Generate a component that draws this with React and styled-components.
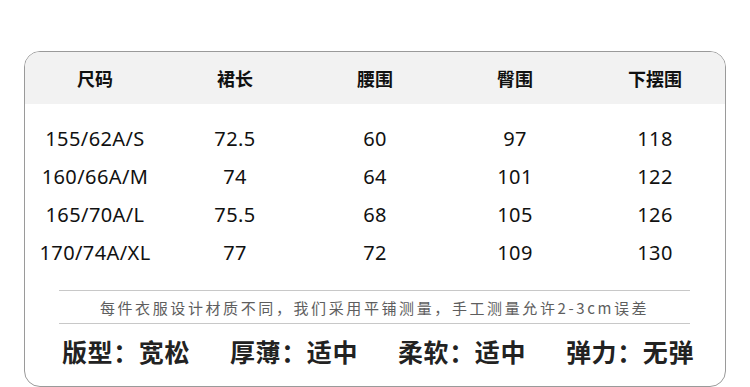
import React from "react"
import styled, { createGlobalStyle } from "styled-components"

const GlobalStyle = createGlobalStyle`
  html, body {
    margin: 0;
    padding: 0;
    background: #fff;
  }
  body {
    font-family: "Noto Sans", "Noto Sans CJK SC", sans-serif;
  }
`

const headers = ["尺码", "裙长", "腰围", "臀围", "下摆围"]

const rows = [
  ["155/62A/S", "72.5", "60", "97", "118"],
  ["160/66A/M", "74", "64", "101", "122"],
  ["165/70A/L", "75.5", "68", "105", "126"],
  ["170/74A/XL", "77", "72", "109", "130"],
]

const features = [
  ["版型", "宽松"],
  ["厚薄", "适中"],
  ["柔软", "适中"],
  ["弹力", "无弹"],
]

const App = () => {
  return (
    <>
      <GlobalStyle />
      <Page>
        <Card>
          <HeadRow>
            {headers.map((h) => (
              <HeadCell key={h}>{h}</HeadCell>
            ))}
          </HeadRow>
          <Body>
            {rows.map((r) => (
              <Row key={r[0]}>
                {r.map((c, i) => (
                  <Cell key={i}>{c}</Cell>
                ))}
              </Row>
            ))}
          </Body>
          <Note>每件衣服设计材质不同，我们采用平铺测量，手工测量允许2-3cm误差</Note>
          <Features>
            {features.map(([k, v]) => (
              <Feature key={k}>{k}：{v}</Feature>
            ))}
          </Features>
        </Card>
      </Page>
    </>
  )
}

const Page = styled.main`
  width: 750px;
  height: 387px;
  padding: 51px 0 0 24px;
  box-sizing: border-box;
  overflow: hidden;
`

const Card = styled.section`
  width: 702px;
  height: 336px;
  box-sizing: border-box;
  border: 1px solid #9a9a9a;
  border-radius: 16px;
  overflow: hidden;
  display: flex;
  flex-direction: column;
`

const HeadRow = styled.div`
  display: grid;
  grid-template-columns: repeat(5, 140px);
  height: 52px;
  align-items: center;
  background: #f2f2f2;
`

const HeadCell = styled.div`
  text-align: center;
  font-family: "Noto Sans CJK SC", sans-serif;
  font-size: 18px;
  font-weight: 700;
  color: #111;
`

const Body = styled.div`
  padding-top: 15px;
  display: flex;
  flex-direction: column;
`

const Row = styled.div`
  display: grid;
  grid-template-columns: repeat(5, 140px);
  height: 38px;
  align-items: center;
`

const Cell = styled.div`
  text-align: center;
  font-size: 20px;
  letter-spacing: 0.4px;
  color: #111;
`

const Note = styled.div`
  margin: 19px 35px 0 34px;
  height: 32px;
  border-top: 1px solid #c8c8c8;
  border-bottom: 1px solid #c8c8c8;
  display: flex;
  align-items: center;
  justify-content: center;
  font-family: "Noto Sans CJK SC", sans-serif;
  font-size: 15px;
  letter-spacing: 2.6px;
  color: #5e5e5e;
`

const Feature = styled.div`
  font-family: "Noto Sans CJK SC", sans-serif;
  font-size: 25px;
  font-weight: 700;
  letter-spacing: 0.6px;
  color: #222;
  white-space: nowrap;
`

const Features = styled.div`
  flex: 1;
  display: flex;
  justify-content: center;
  align-items: center;
  gap: 40px;
  padding: 0 0 8px 6px;
`

export default App
